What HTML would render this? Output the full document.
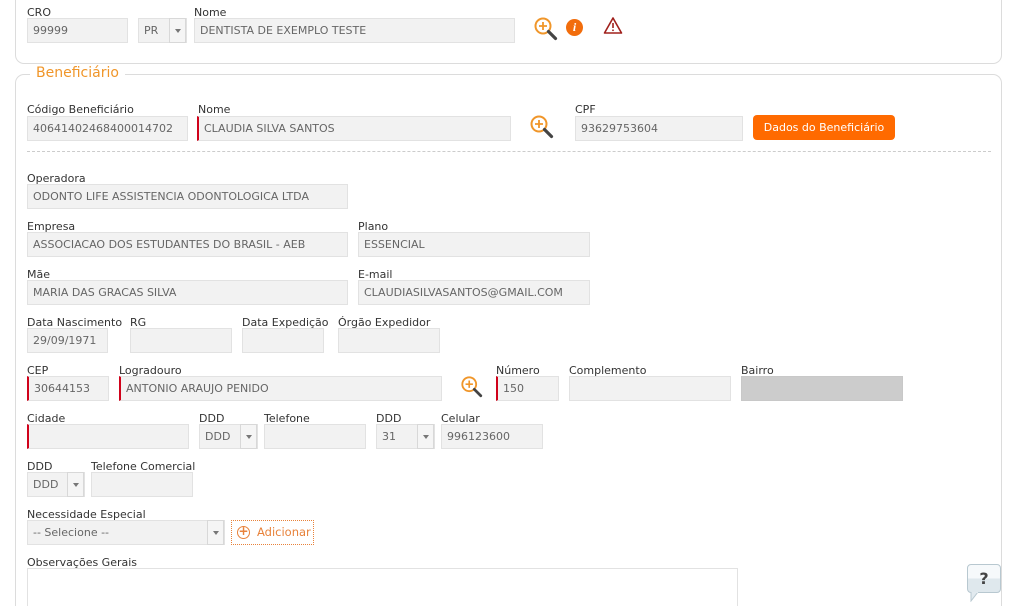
<!DOCTYPE html>
<html><head><meta charset="utf-8"><style>
*{box-sizing:border-box;margin:0;padding:0}
html,body{width:1016px;height:606px;overflow:hidden}
body{background:#fff;font-family:"DejaVu Sans","Liberation Sans",sans-serif;font-size:11px;color:#333;position:relative}
.a{position:absolute}
.l{position:absolute;font-size:11px;color:#333;white-space:nowrap}
.i{position:absolute;height:25px;background:#f2f2f2;border:1px solid #e2e2e2;color:#666;font-size:11px;line-height:23px;padding-left:5px;white-space:nowrap;overflow:hidden}
.r{border-left:2px solid #d0021b}
.s{position:absolute;height:25px;background:#f2f2f2;border:1px solid #e2e2e2;color:#666;line-height:23px;padding-left:5px}
.s b{position:absolute;right:0;top:-1px;width:17px;height:25px;border:1px solid #d8d8d8;background:#f5f5f5}
.s b:after{content:"";position:absolute;left:5px;top:10px;border-left:3px solid transparent;border-right:3px solid transparent;border-top:4px solid #777}
.box{position:absolute;border:1px solid #dcdcdc;border-radius:9px}
</style></head><body>
<div class="box" style="left:15px;top:-20px;width:987px;height:84px"></div>
<div class="box" style="left:15px;top:74px;width:987px;height:532px;border-bottom:none;border-bottom-left-radius:0;border-bottom-right-radius:0"></div>
<div class="a" style="left:30px;top:65px;background:#fff;padding:0 6px;color:#f0962a;font-size:14px">Beneficiário</div>

<div class="l" style="left:27px;top:6px">CRO</div>
<div class="i" style="left:27px;top:18px;width:101px">99999</div>
<div class="s" style="left:138px;top:18px;width:49px">PR<b></b></div>
<div class="l" style="left:194px;top:6px">Nome</div>
<div class="i" style="left:194px;top:18px;width:321px">DENTISTA DE EXEMPLO TESTE</div>
<svg class="a" style="left:533px;top:16px" width="26" height="26" viewBox="0 0 26 26"><circle cx="10" cy="10" r="7.5" fill="#fff" stroke="#f0962a" stroke-width="2"/><path d="M10 6v8M6 10h8" stroke="#f0962a" stroke-width="1.8"/><path d="M15.5 15.5l7 7" stroke="#444" stroke-width="3.2" stroke-linecap="round"/></svg>
<div class="a" style="left:566px;top:19px;width:17px;height:17px;border-radius:50%;background:#f26d0c;color:#fff;font:italic bold 12px 'Liberation Serif',serif;text-align:center;line-height:17px">i</div>
<svg class="a" style="left:603px;top:16px" width="20" height="19" viewBox="0 0 20 19"><path d="M10 2L18.5 17H1.5Z" fill="none" stroke="#a0201c" stroke-width="1.6" stroke-linejoin="round"/><path d="M10 7v5" stroke="#a0201c" stroke-width="1.6"/><circle cx="10" cy="14.3" r="0.9" fill="#a0201c"/></svg>

<div class="l" style="left:27px;top:103px">Código Beneficiário</div>
<div class="i" style="left:27px;top:116px;width:161px">40641402468400014702</div>
<div class="l" style="left:198px;top:103px">Nome</div>
<div class="i r" style="left:197px;top:116px;width:314px">CLAUDIA SILVA SANTOS</div>
<svg class="a" style="left:529px;top:114px" width="26" height="26" viewBox="0 0 26 26"><circle cx="10" cy="10" r="7.5" fill="#fff" stroke="#f0962a" stroke-width="2"/><path d="M10 6v8M6 10h8" stroke="#f0962a" stroke-width="1.8"/><path d="M15.5 15.5l7 7" stroke="#444" stroke-width="3.2" stroke-linecap="round"/></svg>
<div class="l" style="left:575px;top:103px">CPF</div>
<div class="i" style="left:575px;top:116px;width:168px">93629753604</div>
<div class="a" style="left:753px;top:115px;width:142px;height:25px;background:#ff6a00;border-radius:4px;color:#fff;text-align:center;line-height:25px">Dados do Beneficiário</div>
<div class="a" style="left:27px;top:151px;width:964px;border-top:1px dashed #ccc"></div>

<div class="l" style="left:27px;top:172px">Operadora</div>
<div class="i" style="left:27px;top:184px;width:321px">ODONTO LIFE ASSISTENCIA ODONTOLOGICA LTDA</div>
<div class="l" style="left:27px;top:220px">Empresa</div>
<div class="i" style="left:27px;top:232px;width:321px">ASSOCIACAO DOS ESTUDANTES DO BRASIL - AEB</div>
<div class="l" style="left:358px;top:220px">Plano</div>
<div class="i" style="left:358px;top:232px;width:232px">ESSENCIAL</div>
<div class="l" style="left:27px;top:268px">Mãe</div>
<div class="i" style="left:27px;top:280px;width:321px">MARIA DAS GRACAS SILVA</div>
<div class="l" style="left:358px;top:268px">E-mail</div>
<div class="i" style="left:358px;top:280px;width:232px">CLAUDIASILVASANTOS@GMAIL.COM</div>

<div class="l" style="left:27px;top:316px">Data Nascimento</div>
<div class="i" style="left:27px;top:328px;width:81px">29/09/1971</div>
<div class="l" style="left:130px;top:316px">RG</div>
<div class="i" style="left:130px;top:328px;width:102px"></div>
<div class="l" style="left:242px;top:316px">Data Expedição</div>
<div class="i" style="left:242px;top:328px;width:82px"></div>
<div class="l" style="left:338px;top:316px">Órgão Expedidor</div>
<div class="i" style="left:338px;top:328px;width:102px"></div>

<div class="l" style="left:27px;top:364px">CEP</div>
<div class="i r" style="left:27px;top:376px;width:82px">30644153</div>
<div class="l" style="left:119px;top:364px">Logradouro</div>
<div class="i r" style="left:119px;top:376px;width:323px">ANTONIO ARAUJO PENIDO</div>
<svg class="a" style="left:460px;top:375px" width="24" height="24" viewBox="0 0 26 26"><circle cx="10" cy="10" r="7.5" fill="#fff" stroke="#f0962a" stroke-width="2"/><path d="M10 6v8M6 10h8" stroke="#f0962a" stroke-width="1.8"/><path d="M15.5 15.5l7 7" stroke="#444" stroke-width="3" stroke-linecap="round"/></svg>
<div class="l" style="left:496px;top:364px">Número</div>
<div class="i r" style="left:496px;top:376px;width:63px">150</div>
<div class="l" style="left:569px;top:364px">Complemento</div>
<div class="i" style="left:569px;top:376px;width:162px"></div>
<div class="l" style="left:741px;top:364px">Bairro</div>
<div class="i" style="left:741px;top:376px;width:162px;background:#ccc;border-color:#c8c8c8"></div>

<div class="l" style="left:27px;top:412px">Cidade</div>
<div class="i r" style="left:27px;top:424px;width:162px"></div>
<div class="l" style="left:199px;top:412px">DDD</div>
<div class="s" style="left:199px;top:424px;width:59px">DDD<b></b></div>
<div class="l" style="left:264px;top:412px">Telefone</div>
<div class="i" style="left:264px;top:424px;width:102px"></div>
<div class="l" style="left:376px;top:412px">DDD</div>
<div class="s" style="left:376px;top:424px;width:59px">31<b></b></div>
<div class="l" style="left:441px;top:412px">Celular</div>
<div class="i" style="left:441px;top:424px;width:102px">996123600</div>

<div class="l" style="left:27px;top:460px">DDD</div>
<div class="s" style="left:27px;top:472px;width:58px">DDD<b></b></div>
<div class="l" style="left:91px;top:460px">Telefone Comercial</div>
<div class="i" style="left:91px;top:472px;width:102px"></div>

<div class="l" style="left:27px;top:508px">Necessidade Especial</div>
<div class="s" style="left:27px;top:520px;width:198px">-- Selecione --<b></b></div>
<div class="a" style="left:231px;top:520px;width:83px;height:25px;border:1px dotted #e8823a;color:#e8823a;line-height:23px;padding-left:25px;font-size:11.5px">Adicionar</div>
<div class="a" style="left:237px;top:526px;width:13px;height:13px;border:1.5px solid #e8823a;border-radius:50%;color:#e8823a;font-size:12px;line-height:9px;text-align:center;font-weight:bold">+</div>

<div class="l" style="left:27px;top:556px">Observações Gerais</div>
<div class="a" style="left:27px;top:568px;width:711px;height:38px;border:1px solid #e2e2e2;border-bottom:none;background:#fff"></div>

<div class="a" style="left:967px;top:564px;width:34px;height:29px;border:1px solid #b8c8d0;border-radius:4px;background:linear-gradient(#f6f9fb 0 50%,#dfe8ed 50%);text-align:center;font:bold 16px 'DejaVu Sans',sans-serif;color:#444;line-height:27px">?</div>
<svg class="a" style="left:970px;top:592px" width="12" height="10"><path d="M1 0L1 9L8 0Z" fill="#e2eaef" stroke="#b8c8d0"/><path d="M1.5 0H8" stroke="#e2eaef" stroke-width="2"/></svg>
</body></html>
